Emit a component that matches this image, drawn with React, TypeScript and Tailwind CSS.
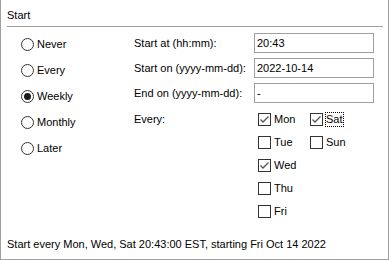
import React from 'react'

function Radio({ label, checked }: { label: string; checked?: boolean }) {
  return (
    <div className="flex h-[26px] items-center">
      <span className="flex h-[13px] w-[13px] items-center justify-center rounded-full border border-[#333] bg-white">
        {checked && <span className="h-[7px] w-[7px] rounded-full bg-[#1a1a1a]" />}
      </span>
      <span className="ml-[3px]">{label}</span>
    </div>
  )
}

function Check({ label, checked, focused }: { label: string; checked?: boolean; focused?: boolean }) {
  return (
    <div className="flex h-[23px] items-center">
      <span className="flex h-[13px] w-[13px] items-center justify-center border border-[#333] bg-white">
        {checked && (
          <svg width="11" height="11" viewBox="0 0 11 11">
            <polyline points="1.5,5.5 4,8 9.5,2.5" fill="none" stroke="#555" strokeWidth="1.3" />
          </svg>
        )}
      </span>
      <span
        className={
          focused
            ? 'ml-[2px] border border-dotted border-black leading-[13px]'
            : 'ml-[2px] border border-transparent leading-[13px]'
        }
      >
        {label}
      </span>
    </div>
  )
}

function Field({ label, value }: { label: string; value: string }) {
  return (
    <div className="flex h-[20px] items-center">
      <span className="w-[120px]">{label}</span>
      <div className="flex h-[20px] w-[120px] items-center border border-[#a0a0a0] bg-white pl-[2px]">{value}</div>
    </div>
  )
}

export default function App() {
  return (
    <div className="flex h-[260px] w-[389px] flex-col border-x border-b border-[#a0a0a0] bg-white font-['Liberation_Sans',Arial,sans-serif] text-[11px] leading-[13px] text-black">
      <div className="h-[26px] pl-[6px] pt-[9px]">Start</div>
      <div className="ml-[6px] h-px w-[376px] bg-[#a0a0a0]" />

      <div className="flex flex-1">
        <div className="w-[133px] pl-[20px] pt-[4px]">
          <Radio label="Never" />
          <Radio label="Every" />
          <Radio label="Weekly" checked />
          <Radio label="Monthly" />
          <Radio label="Later" />
        </div>

        <div className="flex flex-col gap-[5px] pt-[6px]">
          <Field label="Start at (hh:mm):" value="20:43" />
          <Field label="Start on (yyyy-mm-dd):" value="2022-10-14" />
          <Field label="End on (yyyy-mm-dd):" value="-" />
          <div className="flex">
            <span className="flex h-[23px] w-[120px] items-center">Every:</span>
            <div className="flex pl-[4px]">
              <div className="w-[52px]">
                <Check label="Mon" checked />
                <Check label="Tue" />
                <Check label="Wed" checked />
                <Check label="Thu" />
                <Check label="Fri" />
              </div>
              <div>
                <Check label="Sat" checked focused />
                <Check label="Sun" />
              </div>
            </div>
          </div>
        </div>
      </div>

      <div className="mb-[8px] h-[13px] pl-[6px]">
        Start every Mon, Wed, Sat 20:43:00 EST, starting Fri Oct 14 2022
      </div>
    </div>
  )
}
